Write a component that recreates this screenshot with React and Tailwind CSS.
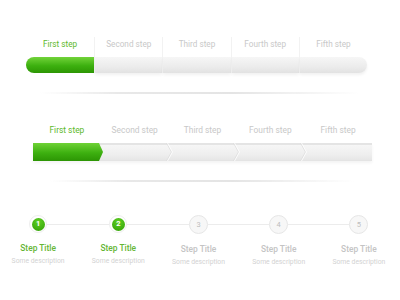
import React from 'react';

const steps = ['First step', 'Second step', 'Third step', 'Fourth step', 'Fifth step'];

function RoundBar() {
  return (
    <div className="ml-[26px] w-[341px] grid grid-cols-5">
      {steps.map((s, i) => (
        <div key={s} className={`flex flex-col ${i > 0 ? 'border-l border-[#f2f2f2]' : ''}`}>
          <div className={`h-[20px] pt-[1px] text-center text-[8.2px] leading-[12px] ${i === 0 ? 'text-[#5cb82a]' : 'text-[#c8c8c8]'}`}>
            {s}
          </div>
          <div
            className={`h-[16px] ${i === 0 ? 'rounded-l-full bg-[linear-gradient(#72d33a,#3cb00f_55%,#2d9604)]' : 'bg-[linear-gradient(#f6f6f6,#ececec_60%,#e2e2e2)] shadow-[0_2px_3px_rgba(0,0,0,0.06)]'} ${i === 4 ? 'rounded-r-full' : ''}`}
          />
        </div>
      ))}
    </div>
  );
}

function Chevron() {
  return (
    <svg className="absolute right-[-3px] top-0" width="7" height="18" viewBox="0 0 7 18">
      <path d="M0.5 0 L5.5 9 L0.5 18" fill="none" stroke="#dcdcdc" strokeWidth="0.8" />
      <path d="M1.5 0 L6.5 9 L1.5 18" fill="none" stroke="#ffffff" strokeWidth="0.8" />
    </svg>
  );
}

function ArrowBar() {
  return (
    <div className="ml-[33px] w-[339px]">
      <div className="grid grid-cols-5 h-[19px]">
        {steps.map((s, i) => (
          <div key={s} className={`text-center text-[8.4px] leading-[12px] ${i === 0 ? 'text-[#5cb82a]' : 'text-[#c8c8c8]'}`}>
            {s}
          </div>
        ))}
      </div>
      <div className="flex h-[18px] bg-[linear-gradient(#e4e4e4,#e4e4e4_2px,#f6f6f6_2px,#eeeeee_70%,#e6e6e6)] border-b border-[#e4e4e4] shadow-[0_2px_3px_rgba(0,0,0,0.05)]">
        <div className="w-[70px] h-[18px] bg-[linear-gradient(#6fd236,#3db010_55%,#2c9504)] [clip-path:polygon(0_0,66px_0,70px_50%,66px_100%,0_100%)]" />
        {[1, 2, 3].map((i) => (
          <div key={i} className="relative w-[67px]">
            <Chevron />
          </div>
        ))}
      </div>
    </div>
  );
}

function Shadow({ className }) {
  return (
    <div
      className={`h-[2px] bg-[linear-gradient(90deg,transparent,#e8e8e8_25%,#e4e4e4_60%,transparent)] blur-[0.4px] ${className}`}
    />
  );
}

function Dots() {
  return (
    <div className="ml-[-2px] grid grid-cols-5 w-[401px]">
      {[1, 2, 3, 4, 5].map((n, i) => {
        const done = n <= 2;
        return (
          <div key={n} className="flex flex-col items-center">
            <div className="flex items-center w-full">
              <div className={`flex-1 h-px ${i === 0 ? '' : 'bg-[#ececec]'}`} />
              {done ? (
                <div className="w-[18px] h-[18px] rounded-full bg-white border border-[#eeeeee] flex items-center justify-center">
                  <div className="w-[13px] h-[13px] rounded-full bg-[radial-gradient(circle_at_50%_30%,#5fcf22,#2f9e05)] flex items-center justify-center text-[7.5px] font-bold text-white leading-none">
                    {n}
                  </div>
                </div>
              ) : (
                <div className="w-[19px] h-[19px] rounded-full bg-[#f7f7f7] border border-[#e6e6e6] flex items-center justify-center text-[7.5px] text-[#bdbdbd] leading-none">
                  {n}
                </div>
              )}
              <div className={`flex-1 h-px ${i === 4 ? '' : 'bg-[#ececec]'}`} />
            </div>
            <div className={`mt-[10px] text-[8.4px] leading-[11px] font-medium ${done ? 'text-[#64b534]' : 'text-[#c4c4c4]'}`}>
              Step Title
            </div>
            <div className="mt-[3px] text-[6.8px] leading-[9px] text-[#d2d2d2]">Some description</div>
          </div>
        );
      })}
    </div>
  );
}

export default function App() {
  return (
    <div className="w-[400px] h-[300px] bg-white overflow-hidden font-['Roboto',sans-serif] pt-[37px]">
      <RoundBar />
      <Shadow className="mt-[19px] ml-[40px] w-[320px]" />
      <div className="mt-[30px]">
        <ArrowBar />
      </div>
      <Shadow className="mt-[19px] ml-[50px] w-[305px]" />
      <div className="mt-[33px]">
        <Dots />
      </div>
    </div>
  );
}
